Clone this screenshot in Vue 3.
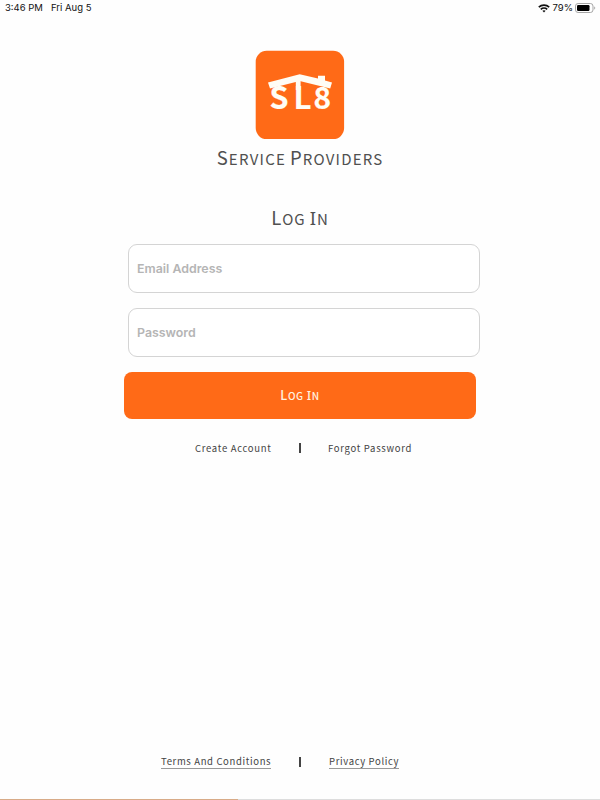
<template>
  <div class="screen">
    <header class="status-bar">
      <div class="status-left">
        <span class="time">3:46 PM</span>
        <span class="date">Fri Aug 5</span>
      </div>
      <div class="status-right">
        <svg class="wifi" width="12" height="9" viewBox="0 0 12 9" fill="none" stroke="#111" stroke-width="1.6">
          <path d="M0.8 3.2C3.7 0.4 8.3 0.4 11.2 3.2" />
          <path d="M2.8 5.3C4.6 3.6 7.4 3.6 9.2 5.3" />
          <path d="M4.4 6.8C5.3 6 6.7 6 7.6 6.8L6 8.5Z" fill="#111" stroke="none" />
        </svg>
        <span class="percent">79%</span>
        <svg class="battery" width="21" height="10" viewBox="0 0 21 10">
          <rect x="0.5" y="0.5" width="17.5" height="9" rx="2.6" fill="none" stroke="#a5a5a5" />
          <rect x="2" y="2" width="12.5" height="6" rx="1.2" fill="#000" />
          <path d="M19.3 3.4C20.5 3.8 20.5 6.2 19.3 6.6Z" fill="#999" />
        </svg>
      </div>
    </header>

    <main class="content">
      <svg class="logo" width="90" height="90" viewBox="0 0 90 90">
        <rect x="0.7" y="0.7" width="88.4" height="88.4" rx="11" fill="#ff6a17" />
        <path
          d="M13 32.6L44.7 24.2L63 28.6V25.7H70V30.5L77 32.6L75.2 38.6L44.7 31L15 38.6Z"
          fill="#fffdf5"
        />
        <g class="logo-text" fill="#fffdf5" stroke="#fffdf5">
          <text x="14.6" y="59" textLength="19" lengthAdjust="spacingAndGlyphs">S</text>
          <text x="38.4" y="59" textLength="18" lengthAdjust="spacingAndGlyphs">L</text>
          <text x="58.4" y="59" textLength="17.6" lengthAdjust="spacingAndGlyphs">8</text>
        </g>
        <path d="M40.8 30H45.6V40H40.8Z" fill="#fffdf5" />
      </svg>
      <h1 class="brand caps"><span>Service</span><span>Providers</span></h1>
      <h2 class="title caps"><span>Log</span><span class="slab">In</span></h2>

      <form class="form" @submit.prevent>
        <input v-model="email" class="field" type="email" placeholder="Email Address" />
        <input v-model="password" class="field" type="password" placeholder="Password" />
        <button class="submit caps" type="submit"><span>Log</span><span class="slab">In</span></button>
      </form>

      <nav class="links">
        <a class="create">Create Account</a>
        <span class="separator"></span>
        <a class="forgot">Forgot Password</a>
      </nav>
    </main>

    <footer class="links legal">
      <a class="terms">Terms And Conditions</a>
      <span class="separator"></span>
      <a class="privacy">Privacy Policy</a>
    </footer>
    <div class="progress"><div class="progress-value"></div></div>
  </div>
</template>

<script setup>
import { ref } from 'vue'

const email = ref('')
const password = ref('')
</script>

<style>
body {
  margin: 0;
  background: #fefefe;
}
</style>

<style scoped>
.screen {
  display: flex;
  flex-direction: column;
  width: 600px;
  height: 800px;
  overflow: hidden;
  background: #fefefe;
  color: #505050;
  font-family: "Noto Sans CJK SC", "Open Sans", sans-serif;
}

.status-bar {
  display: flex;
  justify-content: space-between;
  height: 16px;
  padding: 0 4px 0 5px;
  color: #111;
  font: 400 9.5px/16px Inter, sans-serif;
}

.status-left,
.status-right {
  display: flex;
  align-items: center;
}

.status-left {
  gap: 8px;
}

.wifi {
  margin-right: 2px;
}

.battery {
  margin-left: 2px;
}

.content {
  display: flex;
  flex: 1;
  flex-direction: column;
  align-items: center;
  padding-top: 34px;
}

.logo {
  display: block;
}

.logo-text {
  font: 700 30.5px "Noto Sans CJK SC", sans-serif;
  stroke-width: 0.2px;
}

/* capitals with a larger first letter on each word */
.caps {
  display: flex;
  align-items: baseline;
  justify-content: center;
  text-transform: uppercase;
  white-space: nowrap;
}

.caps span {
  display: block;
}

.brand,
.title {
  height: 28px;
  margin: 0;
  gap: 4px;
  font-size: 15px;
  font-weight: 400;
  line-height: 28px;
  letter-spacing: 1.2px;
}

.brand span::first-letter,
.title span::first-letter {
  font-size: 18.5px;
}

.brand {
  margin-top: 3px;
}

.title {
  margin-top: 32px;
  letter-spacing: 1px;
}

.caps .slab::first-letter {
  font-family: "Noto Sans", sans-serif;
}

.form {
  display: flex;
  flex-direction: column;
  width: 352px;
  margin-top: 13px;
}

.field {
  box-sizing: border-box;
  width: 352px;
  height: 49px;
  margin: 0 0 15px 4px;
  padding: 0 8px;
  border: 1px solid #d4d4d4;
  border-radius: 9px;
  outline: none;
  background: #fff;
  color: #505050;
  font: 600 12.4px Inter, sans-serif;
}

.field::placeholder {
  color: #b5b5b5;
  opacity: 1;
}

.submit {
  gap: 3px;
  width: 352px;
  height: 47px;
  padding: 13px 0 0;
  border: 0;
  border-radius: 8px;
  background: #ff6a17;
  color: #fff3e0;
  font: 500 10px/20px "Noto Sans CJK SC", sans-serif;
  letter-spacing: 0.6px;
}

.submit span::first-letter {
  font-size: 12.5px;
}

.links {
  display: grid;
  grid-template-columns: 104px 29px 112px;
  align-items: center;
  width: 216px;
  margin-top: 20px;
  color: #444;
  font-size: 9.5px;
  line-height: 18px;
  letter-spacing: 0.7px;
  white-space: nowrap;
}

.content .links {
  align-self: flex-start;
  margin-left: 195px;
}

.separator {
  width: 1.5px;
  height: 10px;
  background: #444;
}

.legal {
  grid-template-columns: 138px 30px 112px;
  width: 280px;
  margin: 0 0 30px 161px;
  letter-spacing: 0.65px;
}

.legal a {
  justify-self: start;
  line-height: 13px;
  border-bottom: 1px solid #999;
}

.progress {
  height: 1px;
  background: #ddd;
}

.progress-value {
  width: 238px;
  height: 1px;
  background: #d8ab88;
}
</style>
